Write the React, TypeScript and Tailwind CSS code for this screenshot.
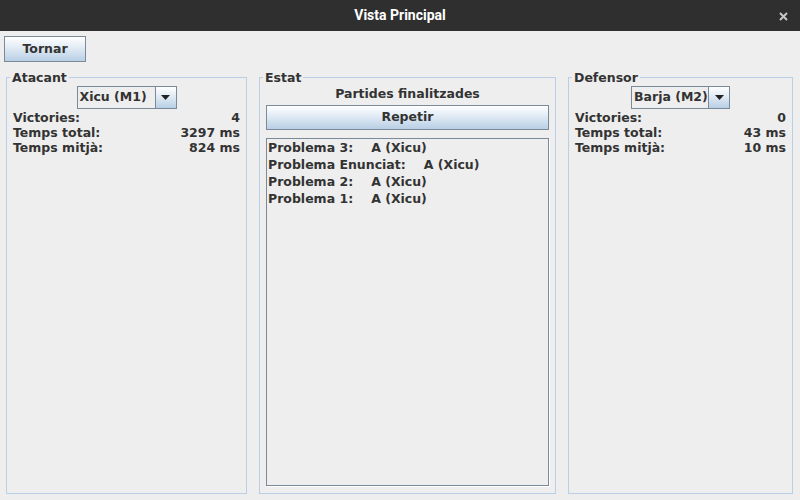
const results = [
  { name: "Problema 3:", winner: "A (Xicu)" },
  { name: "Problema Enunciat:", winner: "A (Xicu)" },
  { name: "Problema 2:", winner: "A (Xicu)" },
  { name: "Problema 1:", winner: "A (Xicu)" },
];

const btn =
  "border border-[#7a8a99] bg-gradient-to-b from-[#ffffff] via-[#dde8f3] to-[#b8cfe5] text-[#333] font-bold";

const Combo = ({ label, width }: { label: string; width: string }) => (
  <div className={`mx-auto flex h-[23px] ${width}`}>
    <div className="flex min-w-0 flex-1 items-center overflow-hidden whitespace-nowrap border border-[#7a8a99] pl-[2px] leading-none">
      {label}
    </div>
    <div className={`flex w-[21px] shrink-0 items-center justify-center border border-l-0 ${btn}`}>
      <svg width="9" height="5" viewBox="0 0 9 5">
        <path d="M0 0h9L4.5 5z" fill="#222" />
      </svg>
    </div>
  </div>
);

const Stat = ({ label, value }: { label: string; value: string }) => (
  <div className="flex justify-between leading-[15px]">
    <span>{label}</span>
    <span>{value}</span>
  </div>
);

const Panel = ({
  title,
  className,
  children,
}: {
  title: string;
  className: string;
  children: React.ReactNode;
}) => (
  <fieldset
    className={`flex min-w-0 flex-col border border-[#b8cfe5] px-[6px] pt-[1px] pb-[6px] ${className}`}
  >
    <legend className="-ml-[3px] px-[2px] leading-[15px]">{title}</legend>
    {children}
  </fieldset>
);

const Player = ({
  title,
  combo,
  comboWidth,
  stats,
  className,
}: {
  title: string;
  combo: string;
  comboWidth: string;
  stats: [string, string, string];
  className: string;
}) => (
  <Panel title={title} className={className}>
    <Combo label={combo} width={comboWidth} />
    <div className="mt-[1px]">
      <Stat label="Victories:" value={stats[0]} />
      <Stat label="Temps total:" value={stats[1]} />
      <Stat label="Temps mitjà:" value={stats[2]} />
    </div>
  </Panel>
);

export default function App() {
  return (
    <div className="flex h-[500px] w-[800px] flex-col bg-[#eeeeee] font-['DejaVu_Sans',sans-serif] text-[12.5px] font-bold text-[#333]">
      <div className="relative flex h-[31px] shrink-0 items-center justify-center bg-[#2f2f2f] font-['Roboto',sans-serif] text-[14px] text-white">
        <span>Vista Principal</span>
        <svg
          className="absolute right-[12px] top-[12px]"
          width="9"
          height="9"
          viewBox="0 0 9 9"
        >
          <path d="M1 1l7 7M8 1L1 8" stroke="#c8c8c8" strokeWidth="2" />
        </svg>
      </div>

      <div className="pl-[4px] pt-[5px]">
        <button className={`h-[26px] w-[82px] ${btn}`}>Tornar</button>
      </div>

      <div className="mt-[8px] flex flex-1 gap-[12px] pl-[6px] pb-[6px]">
        <Player
          title="Atacant"
          combo="Xicu (M1)"
          comboWidth="w-[100px]"
          stats={["4", "3297 ms", "824 ms"]}
          className="w-[241px]"
        />

        <Panel title="Estat" className="w-[297px]">
          <div className="text-center leading-[15px]">Partides finalitzades</div>
          <button className={`mt-[4px] h-[25px] w-full ${btn}`}>Repetir</button>
          <div className="mt-[8px] mb-[1px] flex-1 border border-[#7a8a99] pl-[1px] shadow-[1px_1px_0_#ffffff]">
            {results.map((r) => (
              <div key={r.name} className="leading-[17px]">
                {r.name}
                <span className="pl-[18px]">{r.winner}</span>
              </div>
            ))}
          </div>
        </Panel>

        <Player
          title="Defensor"
          combo="Barja (M2)"
          comboWidth="w-[99px]"
          stats={["0", "43 ms", "10 ms"]}
          className="w-[225px]"
        />
      </div>
    </div>
  );
}
